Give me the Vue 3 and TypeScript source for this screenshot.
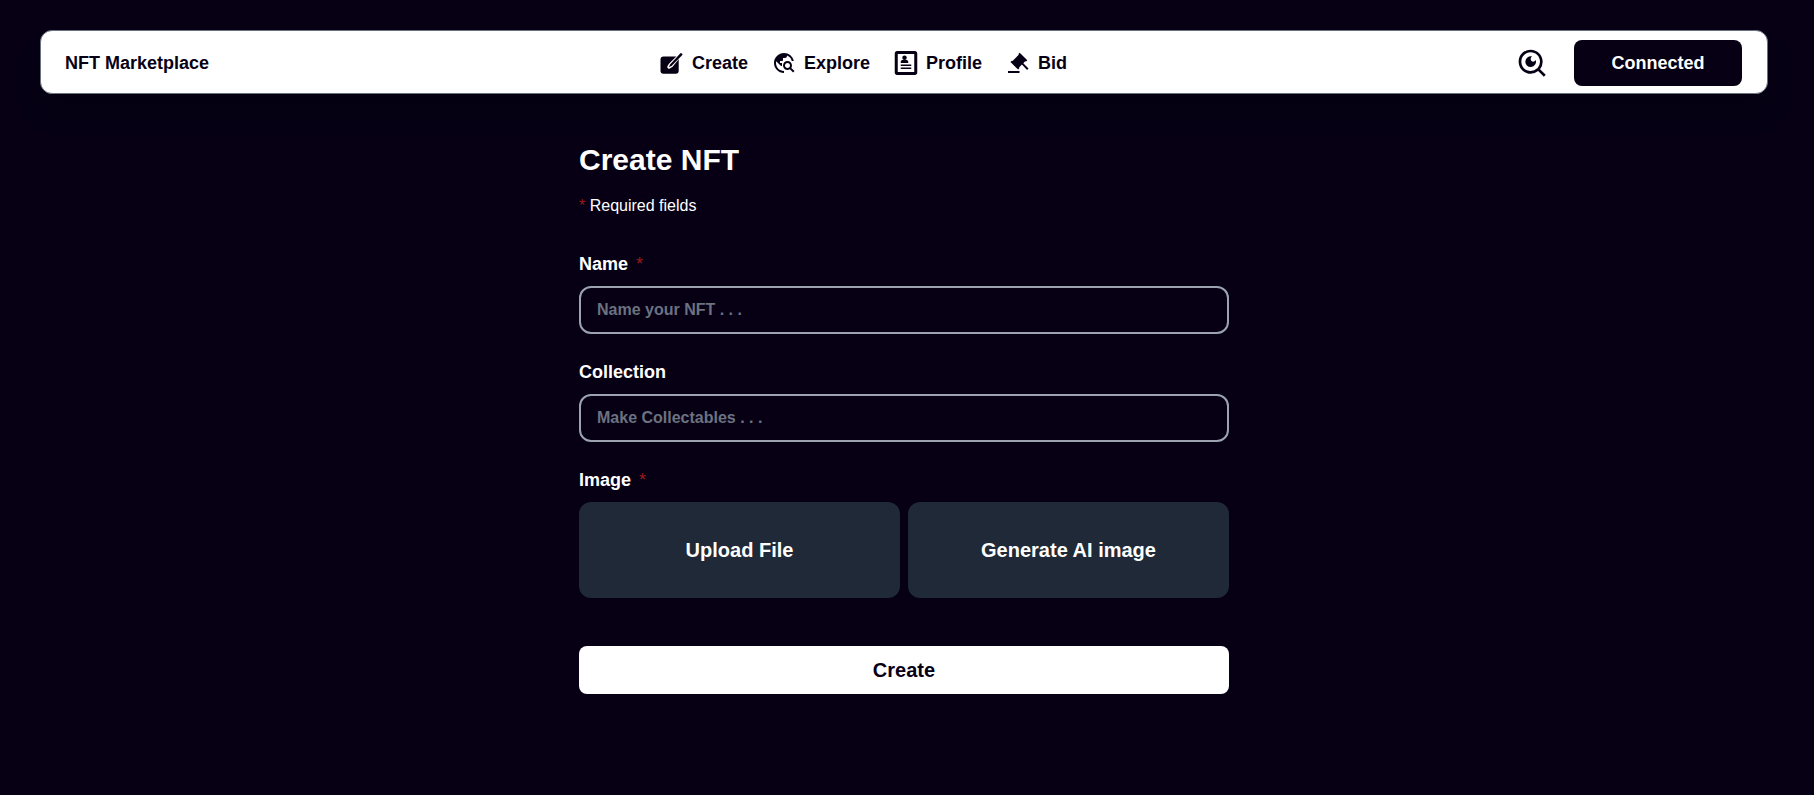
<script setup lang="ts">
interface Shape {
  d: string
  kind?: string
}

interface NavItem {
  label: string
  size: string
  shapes: Shape[]
}

const navItems: NavItem[] = [
  {
    label: 'Create',
    size: '0 0 24 24',
    shapes: [
      { d: 'M3.500 5.500h12.200a3 3 0 0 1 3 3v11.200a3 3 0 0 1-3 3H3.500a3 3 0 0 1-3-3V8.500a3 3 0 0 1 3-3z' },
      { d: 'M19.500 4.600 10.400 13.700 9 16 11.300 14.600z', kind: 'gap' },
      { d: 'M20.200 2.400a1.100 1.100 0 0 1 1.600 0l.3.3a1.100 1.100 0 0 1 0 1.600L11.500 14.900l-2.600 1.200 1.100-2.700z' }
    ]
  },
  {
    label: 'Explore',
    size: '0 0 24 24',
    shapes: [
      { d: 'M19.300 16.900c.4-.7.7-1.500.7-2.400 0-2.500-2-4.500-4.500-4.500S11 12 11 14.500s2 4.500 4.500 4.500c.9 0 1.700-.3 2.400-.7l3.200 3.200 1.400-1.400-3.200-3.200zm-3.800.1c-1.400 0-2.500-1.100-2.500-2.500s1.100-2.500 2.500-2.500 2.500 1.100 2.500 2.500-1.100 2.500-2.500 2.500zM12 20v2C6.480 22 2 17.520 2 12S6.480 2 12 2c4.840 0 8.870 3.440 9.800 8h-2.070A8 8 0 0 0 15 4.590V5c0 1.100-.9 2-2 2h-2v2c0 .55-.45 1-1 1H8v2h2v3H9l-4.790-4.790C4.080 10.790 4 11.380 4 12c0 4.410 3.590 8 8 8z' }
    ]
  },
  {
    label: 'Profile',
    size: '-0.5 0 16 16',
    shapes: [
      { d: 'M13.500 0h-12C.675 0 0 .675 0 1.500v13c0 .825.675 1.500 1.500 1.500h12c.825 0 1.500-.675 1.500-1.500v-13c0-.825-.675-1.500-1.500-1.500zM13 14H2V2h11v12zM4 9h7v1H4zM4 11h7v1H4zM5 4.500a1.500 1.500 0 1 1 3 0 1.500 1.500 0 0 1-3 0zM7.500 6h-2C4.675 6 4 6.450 4 7v1h5V7c0-.55-.675-1-1.500-1z' }
    ]
  },
  {
    label: 'Bid',
    size: '0 0 24 24',
    shapes: [
      { d: 'M2 20h11.500v2H2z' },
      { d: 'M13.700 1.700l7.600 7.600-1.200 1.200-.9-.2-1.900 1.900 5.200 5.300-1.400 1.400-5.200-5.300-2.800 2.800.2.900-1.200 1.200L4.500 10.900l1.200-1.200.9.2 6.100-6.100-.2-.9z' }
    ]
  }
]

const sources: string[] = ['Upload File', 'Generate AI image']
</script>

<template>
  <div class="page">
    <header class="bar">
      <div class="brand">NFT Marketplace</div>
      <nav class="nav">
        <a v-for="item in navItems" :key="item.label" class="link">
          <svg class="icon" :viewBox="item.size">
            <path v-for="shape in item.shapes" :key="shape.d" :d="shape.d" :class="shape.kind" />
          </svg>
          <span>{{ item.label }}</span>
        </a>
      </nav>
      <div class="actions">
        <svg class="search" viewBox="0 0 24 24">
          <path d="M18.031 16.617l4.283 4.282-1.415 1.415-4.282-4.283A8.960 8.960 0 0 1 11 20c-4.968 0-9-4.032-9-9s4.032-9 9-9 9 4.032 9 9a8.960 8.960 0 0 1-1.969 5.617zm-2.006-.742A6.977 6.977 0 0 0 18 11c0-3.868-3.133-7-7-7-3.868 0-7 3.132-7 7 0 3.867 3.132 7 7 7a6.977 6.977 0 0 0 4.875-1.975l.15-.15zm-3.847-8.699a2 2 0 1 0 2.646 2.646 4 4 0 1 1-2.646-2.646z" />
        </svg>
        <button class="connected">Connected</button>
      </div>
    </header>

    <form class="form" @submit.prevent>
      <h1>Create NFT</h1>
      <p class="required"><span class="star">*</span> Required fields</p>

      <label class="label" for="name">Name <span class="star">*</span></label>
      <input id="name" class="input" type="text" placeholder="Name your NFT . . ." />

      <label class="label" for="collection">Collection</label>
      <input id="collection" class="input" type="text" placeholder="Make Collectables . . ." />

      <div class="label">Image <span class="star">*</span></div>
      <div class="sources">
        <button v-for="source in sources" :key="source" type="button" class="source">{{ source }}</button>
      </div>

      <button class="submit" type="submit">Create</button>
    </form>
  </div>
</template>

<style>
body {
  background: #070015;
}
</style>

<style scoped>
.page,
.page * {
  box-sizing: border-box;
  font-family: "Liberation Sans", Arial, sans-serif;
}
.page {
  height: 795px;
  padding: 30px 46px 0 40px;
  background: #070015;
  color: #fff;
  overflow: hidden;
}
.bar {
  display: grid;
  grid-template-columns: 595px 1fr auto;
  align-items: center;
  height: 64px;
  padding: 2px 25px 0 24px;
  border: 1px solid #6b7280;
  border-radius: 12px;
  background: #fff;
  color: #070015;
  font-size: 18px;
  font-weight: 700;
  box-shadow: 0 20px 25px -8px rgba(0, 0, 12, 0.5);
}
.nav {
  display: flex;
  gap: 24px;
}
.link {
  display: flex;
  align-items: center;
  gap: 8px;
  line-height: 28px;
}
.icon {
  width: 24px;
  height: 24px;
  fill: currentColor;
}
.gap {
  fill: #fff;
  stroke: #fff;
  stroke-width: 3.400px;
  stroke-linejoin: round;
}
.actions {
  display: flex;
  align-items: center;
  gap: 26px;
}
.search {
  width: 32px;
  height: 32px;
  fill: currentColor;
}
button {
  border: 0;
  padding: 0;
  font-weight: 700;
}
.connected {
  width: 168px;
  height: 46px;
  border-radius: 8px;
  background: #070015;
  color: #fff;
  font-size: 18px;
}
.form {
  display: flex;
  flex-direction: column;
  width: 650px;
  margin: 48px 0 0 539px;
}
h1 {
  margin: 0;
  font-size: 30px;
  line-height: 36px;
}
.required {
  margin: 16px 0 32px;
  font-size: 16px;
  line-height: 24px;
}
.star {
  color: #991b1b;
  font-weight: 400;
}
.label {
  margin-bottom: 8px;
  font-size: 18px;
  line-height: 28px;
  font-weight: 700;
}
.label .star {
  margin-left: 3px;
}
.input {
  height: 48px;
  margin-bottom: 24px;
  padding: 0 16px;
  border: 2px solid #9ca3af;
  border-radius: 12px;
  outline: none;
  background: transparent;
  color: #fff;
  font-size: 16px;
  font-weight: 700;
}
.input::placeholder {
  color: #6b7280;
  opacity: 1;
}
.sources {
  display: grid;
  grid-template-columns: 1fr 1fr;
  gap: 8px;
}
.source {
  height: 96px;
  border-radius: 12px;
  background: #1f2937;
  color: #fff;
  font-size: 20px;
}
.submit {
  height: 48px;
  margin-top: 48px;
  border-radius: 8px;
  background: #fff;
  color: #070015;
  font-size: 20px;
}
</style>
